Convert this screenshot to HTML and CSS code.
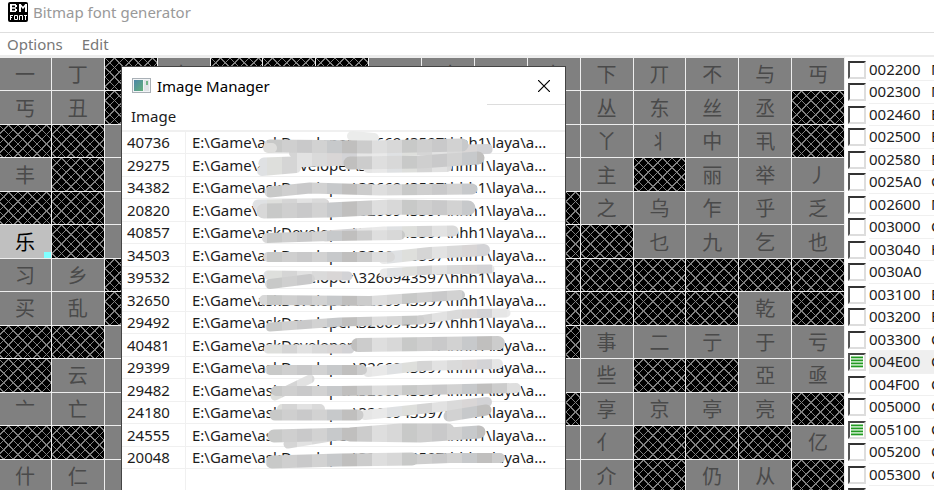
FILE: index.html
```html
<!DOCTYPE html>
<html lang="en">
<head>
<meta charset="utf-8">
<title>Bitmap font generator</title>
<link rel="stylesheet" href="styles.css">
</head>
<body>
<header class="titlebar">
  <svg class="app-icon" viewBox="0 0 20 20" aria-hidden="true">
    <rect width="20" height="20" rx="2" fill="#000"/>
    <g fill="none" stroke="#fff">
      <path stroke-width="2" d="M3 2v8M8 3v2M8 7v2M12 2v8M18 2v8"/>
      <path stroke-width="1.500" d="M3 2.750h5M3 6h5M3 9.250h5M12.500 3L15 6L17.500 3"/>
      <path stroke-width="1" d="M2.500 18v-5M2 13.500h3M2 15.500h2M6.500 13.500h3v4h-3zM11.500 18v-4.500h3V18M16 13.500h3M17.500 13v5"/>
    </g>
  </svg>
  <h1 class="title">Bitmap font generator</h1>
</header>
<nav class="menubar">
  <button class="menu" type="button">Options</button>
  <button class="menu" type="button">Edit</button>
</nav>
<main class="workspace">
  <section class="glyphs" id="glyphs" lang="zh"></section>
  <section class="blocks" id="blocks"></section>
  <section class="dialog" role="dialog" aria-labelledby="dialog-title">
    <header class="dialog-bar">
      <svg class="dialog-icon" viewBox="0 0 19 15" aria-hidden="true">
        <defs><linearGradient id="screen" x2="1" y2="1"><stop stop-color="#4c86a8"/><stop offset="1" stop-color="#62b07a"/></linearGradient></defs>
        <rect x=".5" y=".5" width="18" height="14" fill="#f2f4f6" stroke="#a9b0b6"/>
        <rect x="2" y="2" width="9" height="11" fill="url(#screen)"/>
        <rect x="12" y="2" width="5" height="11" fill="#dfe3e6"/>
        <rect x="14" y="3" width="2" height="4" fill="#74b58a"/>
      </svg>
      <h2 class="dialog-title" id="dialog-title">Image Manager</h2>
      <button class="close" type="button" aria-label="Close">
        <svg viewBox="0 0 12 12" width="12" height="12"><path d="M0 0L12 12M12 0L0 12" stroke="#000" stroke-width="1.200"/></svg>
      </button>
    </header>
    <div class="dialog-menu"><button class="menu dark" type="button">Image</button></div>
    <table class="files"><tbody id="files"></tbody></table>
    <svg class="smudges" viewBox="123 68 442 422" width="442" height="422" aria-hidden="true">
      <defs>
        <linearGradient id="smudge-dark" gradientUnits="userSpaceOnUse" x1="252" y1="0" x2="387" y2="0" spreadMethod="repeat">
          <stop offset="0" stop-color="#d8d8d8"/><stop offset=".111" stop-color="#d8d8d8"/>
          <stop offset=".111" stop-color="#c8c9c8"/><stop offset=".222" stop-color="#c8c9c8"/>
          <stop offset=".222" stop-color="#cfcfcf"/><stop offset=".333" stop-color="#cfcfcf"/>
          <stop offset=".333" stop-color="#c9c9ca"/><stop offset=".444" stop-color="#c9c9ca"/>
          <stop offset=".444" stop-color="#d2d2d2"/><stop offset=".555" stop-color="#d2d2d2"/>
          <stop offset=".555" stop-color="#c7c9cb"/><stop offset=".666" stop-color="#c7c9cb"/>
          <stop offset=".666" stop-color="#c0bfbe"/><stop offset=".777" stop-color="#c0bfbe"/>
          <stop offset=".777" stop-color="#cccccc"/><stop offset=".888" stop-color="#cccccc"/>
          <stop offset=".888" stop-color="#dedede"/><stop offset="1" stop-color="#dedede"/>
        </linearGradient>
        <linearGradient id="smudge-light" gradientUnits="userSpaceOnUse" x1="252" y1="0" x2="387" y2="0" spreadMethod="repeat">
          <stop offset="0" stop-color="#dfe1e3"/><stop offset=".111" stop-color="#dfe1e3"/>
          <stop offset=".111" stop-color="#dedfdc"/><stop offset=".222" stop-color="#dedfdc"/>
          <stop offset=".222" stop-color="#d5d5d5"/><stop offset=".333" stop-color="#d5d5d5"/>
          <stop offset=".333" stop-color="#e2e2e2"/><stop offset=".444" stop-color="#e2e2e2"/>
          <stop offset=".444" stop-color="#dadada"/><stop offset=".555" stop-color="#dadada"/>
          <stop offset=".555" stop-color="#d9d6d6"/><stop offset=".666" stop-color="#d9d6d6"/>
          <stop offset=".666" stop-color="#d3d3d6"/><stop offset=".777" stop-color="#d3d3d6"/>
          <stop offset=".777" stop-color="#e6e6e6"/><stop offset=".888" stop-color="#e6e6e6"/>
          <stop offset=".888" stop-color="#e9e9e9"/><stop offset="1" stop-color="#e9e9e9"/>
        </linearGradient>
      </defs>
      <g fill="none" stroke-linecap="round" stroke-linejoin="round">
        <path stroke="#ebeceb" stroke-width="10" d="M352 136L374 138"/>
        <g stroke="url(#smudge-light)">
          <path stroke-width="10" d="M262 171L296 168M294 153L400 151L488 149M368 168L447 167"/>
          <path stroke-width="11" d="M264 163L350 160M258 205L324 204M326 236L384 232L453 231"/>
          <path stroke-width="12" d="M384 258L430 253L484 250"/>
          <path stroke-width="9" d="M268 275L348 276M384 273L430 270L490 269M420 320L460 314L506 313M268 349L350 349"/>
          <path stroke-width="10" d="M368 372L420 366L498 364M282 409L320 409M365 415L430 408L487 402"/>
          <path stroke-width="9" d="M275 396L310 379M288 444L330 437"/>
        </g>
        <g stroke="url(#smudge-dark)">
          <path stroke-width="13" d="M270 146L370 147L462 145M350 163L420 162L478 158"/>
          <path stroke-width="11" d="M270 192L310 188L380 190L472 189"/>
          <path stroke-width="15" d="M264 211L330 210L390 207L468 208"/>
          <path stroke-width="10" d="M267 238L330 236L400 235M268 257L390 257M270 284L310 279M264 300L370 301L460 295"/>
          <path stroke-width="9" d="M270 327L340 322L420 320"/>
          <path stroke-width="14" d="M358 345L430 344L498 343"/>
          <path stroke-width="10" d="M270 370L362 370M276 391L340 391L420 390L516 388"/>
          <path stroke-width="11" d="M275 415L358 415M449 416L486 410"/>
          <path stroke-width="13" d="M274 436L350 434L400 430L448 430M350 435L420 436L479 432"/>
          <path stroke-width="13" d="M272 462L340 460L412 459"/>
          <path stroke-width="10" d="M400 460L450 458L500 458"/>
        </g>
        <path stroke="#dededc" stroke-width="10" d="M268 148h4"/>
      </g>
    </svg>
  </section>
</main>
<script src="app.js"></script>
</body>
</html>
```
FILE: styles.css
```css
* {
  box-sizing: border-box;
}

body {
  margin: 0;
  height: 100vh;
  display: flex;
  flex-direction: column;
  overflow: hidden;
  background: #fff;
  color: #1c1c1c;
  font: 15px/22px "Noto Sans", "Open Sans", "Noto Sans CJK SC", sans-serif;
}

h1,
h2 {
  margin: 0;
  font-size: inherit;
  font-weight: 400;
}

button {
  padding: 0;
  border: 0;
  background: none;
  font: inherit;
}

.titlebar {
  display: flex;
  gap: 5px;
  height: 33px;
  padding: 2px 8px;
  border-bottom: 1px solid #dedede;
}

.app-icon {
  width: 20px;
  height: 20px;
}

.title {
  color: #999;
  line-height: 20px;
}

.menubar {
  display: flex;
  gap: 19px;
  height: 24px;
  padding: 0 7px;
  border-bottom: 2px solid #ececec;
}

.menu {
  color: #777;
}

.dark {
  color: #1c1c1c;
}

.workspace {
  position: relative;
  flex: 1;
  min-height: 0;
  display: grid;
  grid-template-columns: 1fr 89px;
}

.glyphs {
  display: grid;
  grid-template-columns: repeat(16, 1fr);
  grid-template-rows: repeat(13, 1fr);
  gap: 1px;
  margin: 0 0 -2px -1px;
  padding: 1px 1px 0 0;
  background: #eee;
}

.cell {
  position: relative;
  display: flex;
  align-items: center;
  justify-content: center;
  min-height: 0;
  overflow: hidden;
  background: #808080;
  color: #4a4a4a;
  font: 400 20px/30px "Noto Sans CJK SC", sans-serif;
}

.empty {
  background-color: #000;
  background-image:
    repeating-linear-gradient(45deg, #808080 0 2%, transparent 2% 23%, #808080 23% 25%),
    repeating-linear-gradient(-45deg, #808080 0 2%, transparent 2% 23%, #808080 23% 25%);
  background-size: 19px 19px;
}

.selected {
  background: #c0c0c0;
  color: #000;
}

.selected::after {
  content: "";
  position: absolute;
  right: 0;
  bottom: 0;
  width: 7px;
  height: 6px;
  background: #80ffff;
}

.blocks {
  min-height: 0;
  padding: 2px 0 0 3px;
  overflow: hidden;
}

.block {
  display: flex;
  gap: 3px;
  height: 22px;
  overflow: hidden;
  white-space: nowrap;
  line-height: 21px;
}

.block:nth-child(even) {
  height: 23px;
}

.block label {
  display: grid;
  grid-template-columns: 62px auto;
  flex: 1;
  border-bottom: 1px solid #f0f0f0;
}

.current label {
  background: #efefef;
}

.block input {
  appearance: none;
  flex: none;
  width: 18px;
  height: 18px;
  margin: 2px 0;
  border: 2px solid;
  border-color: #333 #ddd #ddd #555;
  background: #fff;
}

.block input:checked {
  border-color: #444 #ddd #ddd #555;
  background: repeating-linear-gradient(#8fd08f 0 1px, #239a23 1px 2px, #b8e0b8 2px 3px) content-box #fff;
  padding: 1px;
}

.dialog {
  position: absolute;
  top: 9px;
  bottom: 0;
  left: 121px;
  width: 445px;
  overflow: hidden;
  border: 1px solid #444;
  border-bottom: 0;
  background: #fff;
}

.dialog-bar {
  display: flex;
  align-items: center;
  gap: 6px;
  height: 37px;
  padding: 0 15px 0 10px;
}

.dialog-icon {
  width: 19px;
  height: 15px;
}

.dialog-title {
  flex: 1;
  color: #000;
}

.close {
  display: flex;
}

.dialog-menu {
  height: 28px;
  padding: 1px 9px;
  border-bottom: 2px solid #f0f0f0;
  background: linear-gradient(#ddd, #ddd) right top / 78px 1px no-repeat;
}

.files {
  width: 100%;
  border-collapse: separate;
  border-spacing: 0;
  table-layout: fixed;
  line-height: 21px;
}

.files tr {
  height: 22px;
}

.files tr:nth-child(even) {
  height: 23px;
}

.files td {
  padding: 0 0 0 6px;
  border-bottom: 1px solid #f0f0f0;
  white-space: nowrap;
  overflow: hidden;
}

.files td:first-child {
  width: 64px;
  padding-left: 5px;
  border-right: 1px solid #f0f0f0;
}

.files tr:last-child {
  height: 40px;
}

.smudges {
  position: absolute;
  top: 1px;
  left: 1px;
}
```
FILE: app.js
```js
// One string per row of 16 characters: "x" is a missing glyph, "." a plain covered cell.
const rows = [
  "一丁x七xxx万丈三上下丌不与丏",
  "丐丑x........丛东丝丞x",
  "xx.........丫丬中丮x",
  "丰x.........主x丽举丿",
  "xx........x之乌乍乎乏",
  "乐x........xx乜九乞也",
  "习乡x.......xxxxxx",
  "买乱x.......xxxx乾x",
  "xx........x事二亍于亏",
  "x云.........些xx亞亟",
  "亠亡........x享京亭亮x",
  "xx.........亻xxx亿",
  "什仁.........介x仍从x"
];
const glyphs = document.getElementById("glyphs");
for (const ch of rows.join("")) {
  const cell = document.createElement("div");
  cell.className = "cell";
  if (ch === "x") cell.classList.add("empty");
  else if (ch !== ".") cell.textContent = ch;
  if (ch === "乐") cell.classList.add("selected");
  glyphs.append(cell);
}

const blocks = [
  ["002200", "M"], ["002300", "M"], ["002460", "E"], ["002500", "B"], ["002580", "B"],
  ["0025A0", "G"], ["002600", "M"], ["003000", "C"], ["003040", "H"], ["0030A0", ""],
  ["003100", "B"], ["003200", "E"], ["003300", "C"], ["004E00", "C"], ["004F00", "C"],
  ["005000", "C"], ["005100", "C"], ["005200", "C"], ["005300", "C"], ["", ""]
];
document.getElementById("blocks").innerHTML = blocks.map(([code, name]) =>
  `<div class="block${code === "004E00" ? " current" : ""}">` +
  `<input type="checkbox" id="block-${code}"${code === "004E00" || code === "005100" ? " checked" : ""}>` +
  `<label for="block-${code}"><span>${code}</span><span>${name}</span></label></div>`).join("");

const ids = [40736, 29275, 34382, 20820, 40857, 34503, 39532, 32650, 29492, 40481, 29399, 29482, 24180, 24555, 20048];
const path = "E:\\Game\\askDeveloper\\3266943597\\hhh1\\laya\\a...";
document.getElementById("files").innerHTML =
  ids.map(id => `<tr><td>${id}</td><td>${path}</td></tr>`).join("") + "<tr><td></td><td></td></tr>";
```
